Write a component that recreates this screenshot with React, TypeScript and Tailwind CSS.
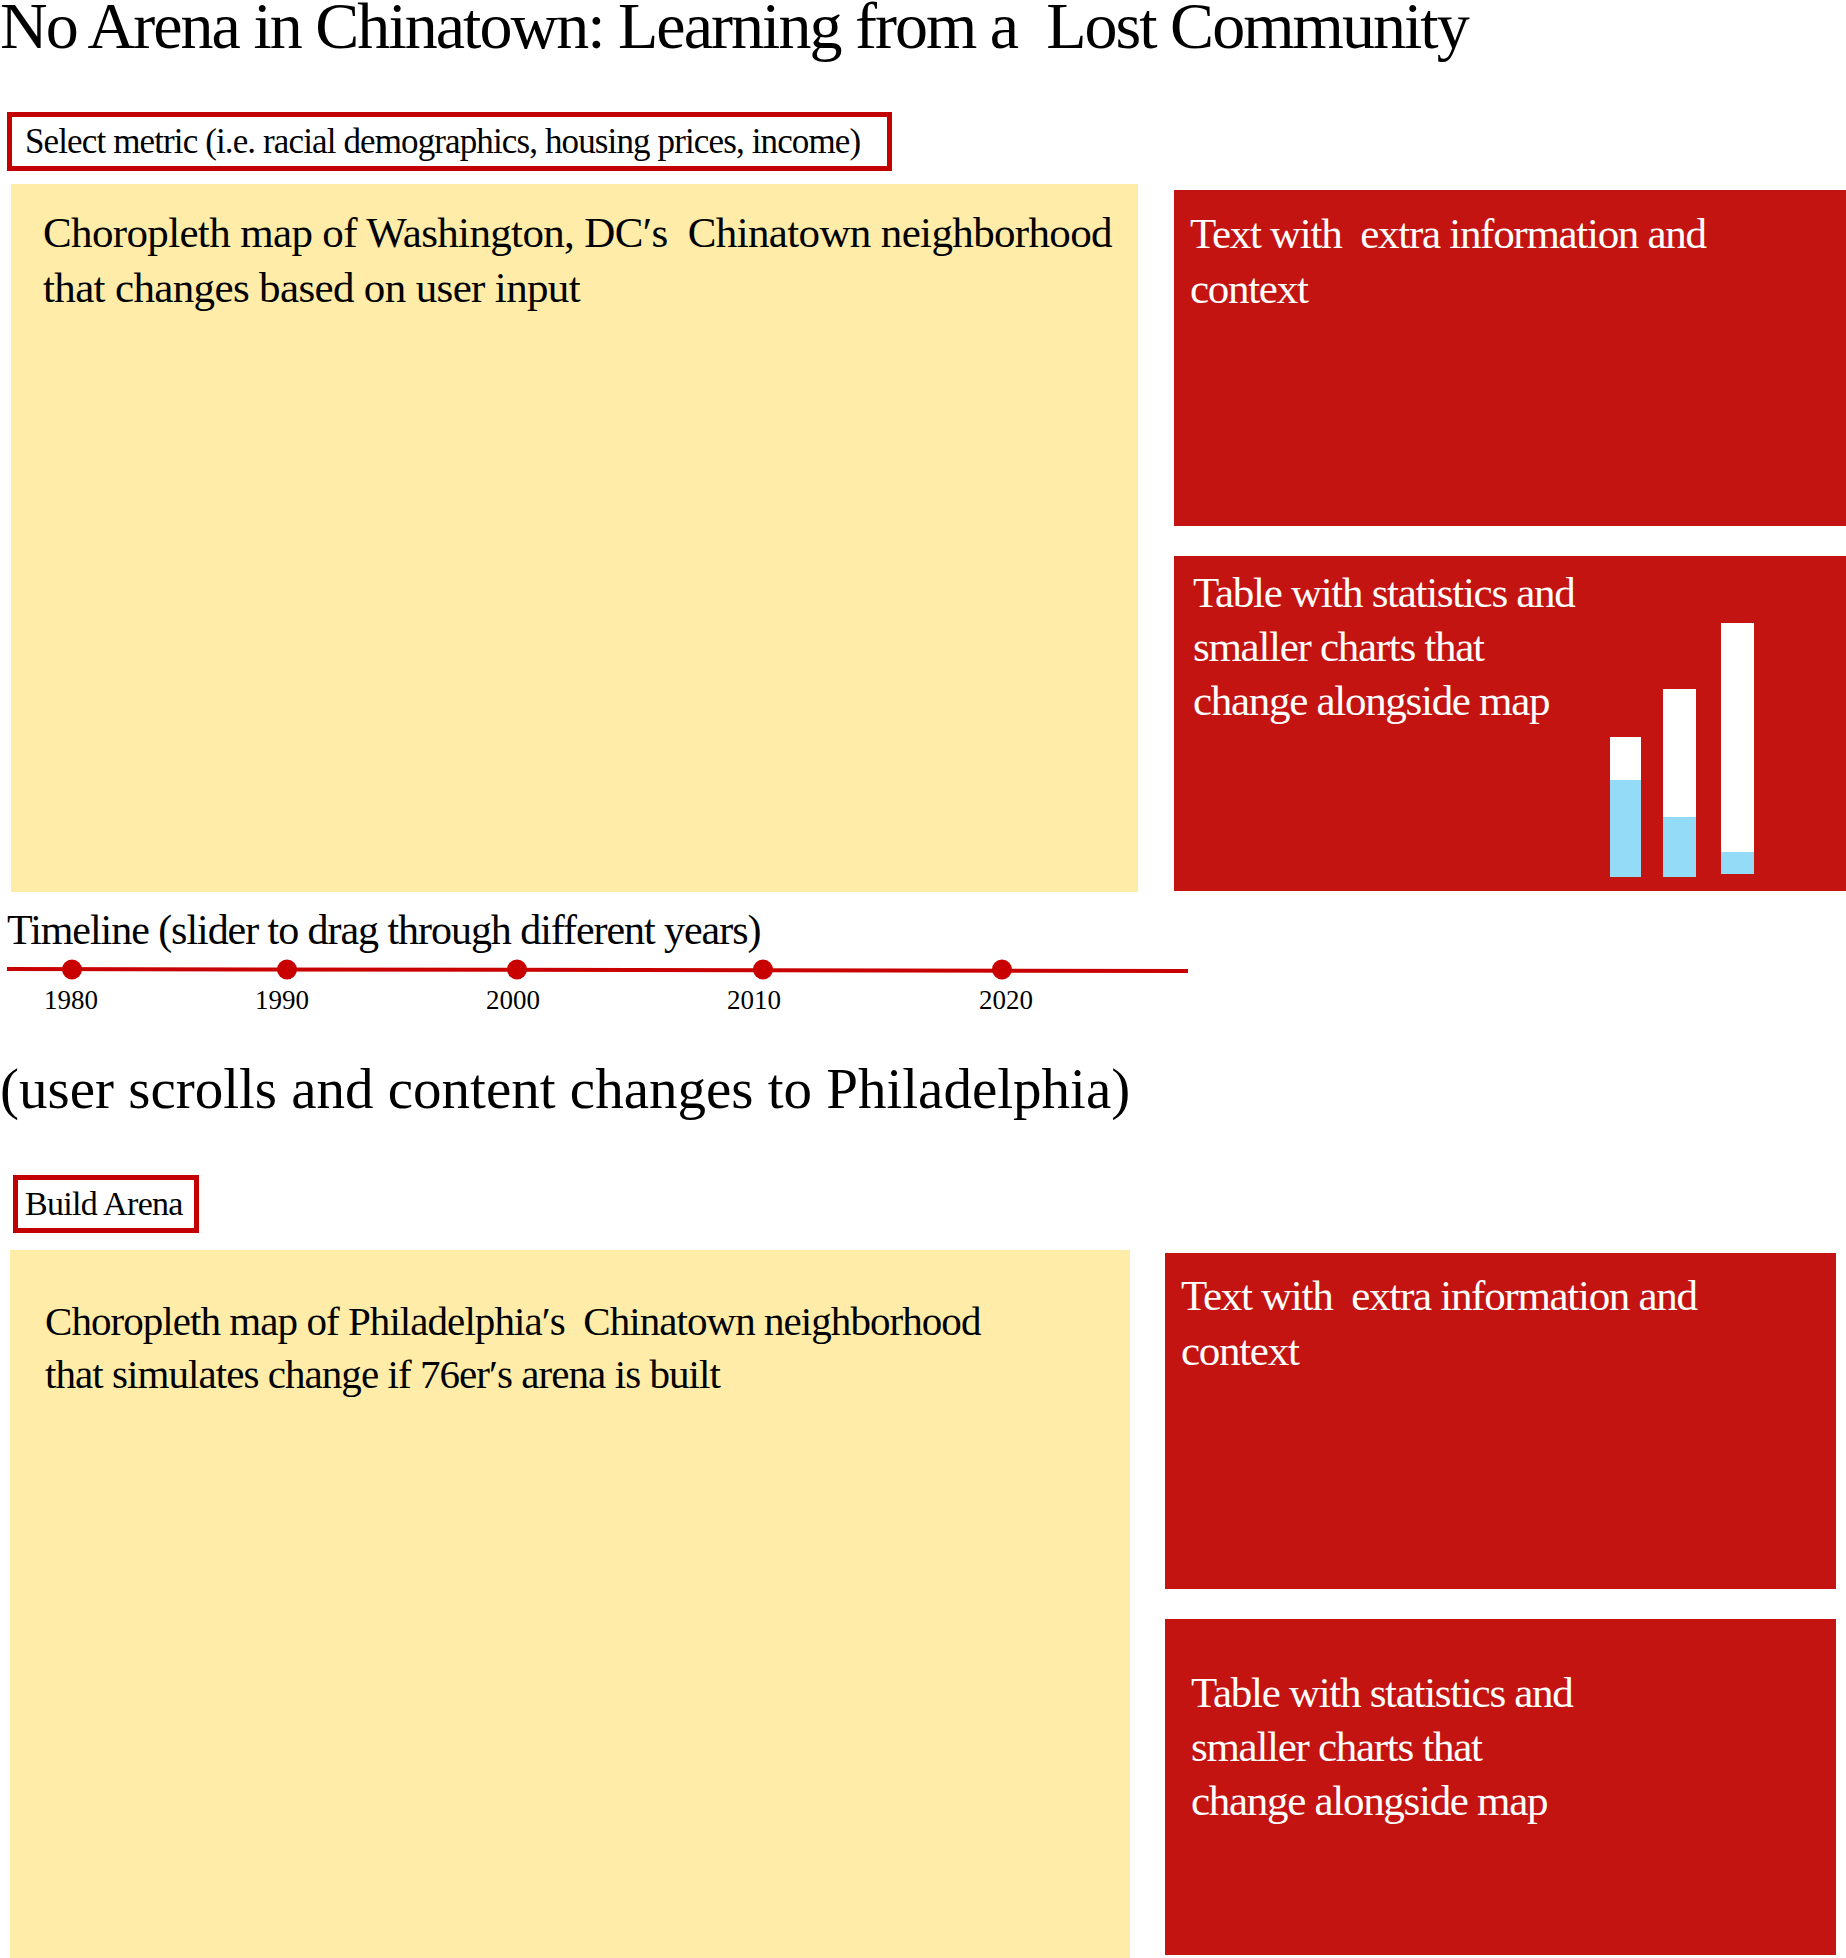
import React from 'react';

const RED = 'bg-[#c41411]';

const years = [
  { label: '1980', dot: 72, text: 71 },
  { label: '1990', dot: 287, text: 282 },
  { label: '2000', dot: 517, text: 513 },
  { label: '2010', dot: 763, text: 754 },
  { label: '2020', dot: 1002, text: 1006 },
];

const bars = [
  { x: 0, w: 31, top: 114, split: 157 },
  { x: 53, w: 33, top: 66, split: 194 },
  { x: 111, w: 33, top: 0, split: 229, bottom: 251 },
];

const MiniChart = () => (
  <svg width="144" height="254" viewBox="0 0 144 254" className="mt-[67px] block">
    {bars.map((b, i) => {
      const bottom = b.bottom ?? 254;
      return (
        <g key={i}>
          <rect x={b.x} y={b.top} width={b.w} height={b.split - b.top} fill="#ffffff" />
          <rect x={b.x} y={b.split} width={b.w} height={bottom - b.split} fill="#93dbf6" />
        </g>
      );
    })}
  </svg>
);

const Timeline = () => (
  <div className="mt-[13px]">
    <p className="pl-[7px] text-[42px] leading-[50px] tracking-[-0.025em]">
      Timeline (slider to drag through different years)
    </p>
    <svg width="1200" height="30" viewBox="0 0 1200 30" className="block">
      <line x1="7" y1="14" x2="1188" y2="16" stroke="#c80000" strokeWidth="4" />
      {years.map((y) => (
        <circle key={y.label} cx={y.dot} cy="14.5" r="10" fill="#c80000" />
      ))}
    </svg>
    <div className="relative h-[30px] w-[1200px] text-[27px] leading-[30px]">
      {years.map((y) => (
        <span
          key={y.label}
          className="absolute top-0 -translate-x-1/2"
          style={{ left: y.text }}
        >
          {y.label}
        </span>
      ))}
    </div>
  </div>
);

export default function App() {
  return (
    <div className="w-[1846px] h-[1958px] overflow-hidden bg-white text-black font-['Liberation_Serif',serif]">
      <h1 className="whitespace-pre text-[66px] leading-[52px] font-normal tracking-[-0.03em]">
        No Arena in Chinatown: Learning from a  Lost Community
      </h1>

      <div className="ml-[7px] mt-[60px] h-[59px] w-[885px] border-[5px] border-[#c30000] pl-[13px] text-[35px] leading-[49px] tracking-[-0.025em] whitespace-nowrap">
        Select metric (i.e. racial demographics, housing prices, income)
      </div>

      {/* Washington, DC */}
      <div className="mt-[13px] flex items-start">
        <div className="ml-[11px] h-[708px] w-[1127px] bg-[#feeca8] pl-[32px] pt-[21px] text-[43px] leading-[55px] tracking-[-0.015em] whitespace-pre">
          Choropleth map of Washington, DC′s  Chinatown neighborhood
          <br />
          that changes based on user input
        </div>
        <div className="ml-[36px] mt-[6px] flex w-[672px] flex-col gap-[30px] text-white">
          <div className={`${RED} h-[336px] pl-[16px] pt-[16px] text-[43px] leading-[55px] tracking-[-0.03em] whitespace-pre`}>
            Text with  extra information and
            <br />
            context
          </div>
          <div className={`${RED} flex h-[335px]`}>
            <div className="w-[436px] pl-[19px] pt-[10px] text-[43px] leading-[54px] tracking-[-0.03em] whitespace-pre">
              Table with statistics and
              <br />
              smaller charts that
              <br />
              change alongside map
            </div>
            <MiniChart />
          </div>
        </div>
      </div>

      <Timeline />

      <p className="mt-[42px] text-[57px] leading-[64px]">
        (user scrolls and content changes to Philadelphia)
      </p>

      <div className="ml-[13px] mt-[54px] h-[58px] w-[186px] border-[5px] border-[#c30000] px-[7px] text-[34px] leading-[48px] tracking-[-0.02em] whitespace-nowrap">
        Build Arena
      </div>

      {/* Philadelphia */}
      <div className="mt-[17px] flex items-start">
        <div className="ml-[10px] h-[708px] w-[1120px] bg-[#feeca8] pl-[35px] pt-[45px] text-[41px] leading-[53px] tracking-[-0.023em] whitespace-pre">
          Choropleth map of Philadelphia′s  Chinatown neighborhood
          <br />
          that simulates change if 76er′s arena is built
        </div>
        <div className="ml-[35px] mt-[3px] flex w-[671px] flex-col gap-[30px] text-white">
          <div className={`${RED} h-[336px] pl-[16px] pt-[15px] text-[43px] leading-[55px] tracking-[-0.03em] whitespace-pre`}>
            Text with  extra information and
            <br />
            context
          </div>
          <div className={`${RED} h-[336px] pl-[26px] pt-[47px] text-[43px] leading-[54px] tracking-[-0.03em] whitespace-pre`}>
            Table with statistics and
            <br />
            smaller charts that
            <br />
            change alongside map
          </div>
        </div>
      </div>
    </div>
  );
}
